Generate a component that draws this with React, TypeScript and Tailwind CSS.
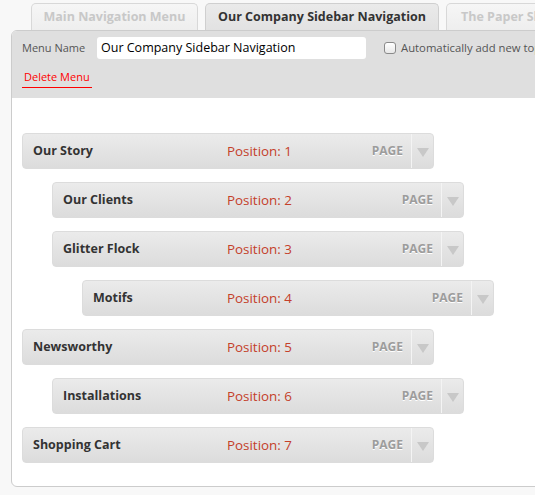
const items = [
  { label: "Our Story", pos: 1, depth: 0 },
  { label: "Our Clients", pos: 2, depth: 1 },
  { label: "Glitter Flock", pos: 3, depth: 1 },
  { label: "Motifs", pos: 4, depth: 2 },
  { label: "Newsworthy", pos: 5, depth: 0 },
  { label: "Installations", pos: 6, depth: 1 },
  { label: "Shopping Cart", pos: 7, depth: 0 },
];

const indent = ["ml-0", "ml-[30px]", "ml-[60px]"];
const labelW = ["w-[204px]", "w-[174px]", "w-[144px]"];

function MenuItem({ label, pos, depth }: { label: string; pos: number; depth: number }) {
  return (
    <div
      className={`${indent[depth]} flex h-[36px] w-[412px] shrink-0 items-center rounded-[4px] border border-[#dcdcdc] bg-gradient-to-b from-[#ebebeb] to-[#dcdcdc]`}
    >
      <div className={`${labelW[depth]} shrink-0 pl-[10px] text-[12.5px] font-bold text-[#333]`}>{label}</div>
      <div className="flex-1 text-[13.4px] text-[#c4402a]">Position: {pos}</div>
      <div className="pr-[8px] text-[12px] font-bold text-[#9c9c9c] [text-shadow:0_1px_0_#fff]">PAGE</div>
      <div className="flex h-full w-[22px] items-center justify-center border-l border-[#f4f4f4] pt-[2px]">
        <svg width="12" height="9" viewBox="0 0 12 9">
          <path d="M0 0 L12 0 L6 9 Z" fill="#c8c8c8" />
        </svg>
      </div>
    </div>
  );
}

export default function App() {
  return (
    <div className="h-[495px] w-[535px] overflow-hidden bg-[#f8f8f8] pt-[3px] font-['Open_Sans',sans-serif]">
      <div className="flex gap-[7px] pl-[31px]">
        <div className="flex h-[27px] w-[167px] shrink-0 items-center justify-center whitespace-nowrap rounded-t-[5px] border border-b-0 border-[#d8d8d8] bg-gradient-to-b from-[#f6f6f6] to-[#eeeeee] text-[12.5px] font-bold text-[#c8c8c8]">
          Main Navigation Menu
        </div>
        <div className="flex h-[27px] w-[234px] shrink-0 items-center justify-center whitespace-nowrap rounded-t-[5px] border border-b-0 border-[#cfcfcf] bg-gradient-to-b from-[#eaeaea] to-[#e2e2e2] text-[12.5px] font-bold text-[#333]">
          Our Company Sidebar Navigation
        </div>
        <div className="flex h-[27px] w-[160px] shrink-0 items-center whitespace-nowrap rounded-t-[5px] border border-b-0 border-[#d8d8d8] bg-gradient-to-b from-[#f6f6f6] to-[#eeeeee] pl-[14px] text-[12.5px] font-bold text-[#c8c8c8]">
          The Paper Shop
        </div>
      </div>
      <div className="ml-[11px] w-[560px] overflow-hidden rounded-[6px] border border-[#cccccc] bg-white">
        <div className="h-[67px] bg-[#dfdfdf] pl-[10px]">
          <div className="flex items-center pt-[6px]">
            <span className="w-[75px] shrink-0 text-[11px] text-[#555]">Menu Name</span>
            <div className="flex h-[22px] w-[269px] shrink-0 items-center rounded-[3px] bg-white pl-[4px] text-[12.5px] text-black">
              Our Company Sidebar Navigation
            </div>
            <span className="ml-[18px] h-[12px] w-[12px] shrink-0 rounded-[3px] border border-[#8a8a8a] bg-gradient-to-b from-white to-[#e8e8e8]" />
            <span className="ml-[5px] whitespace-nowrap text-[11.3px] text-[#555]">Automatically add new top-level pages</span>
          </div>
          <div className="mt-[10px] inline-block border-b border-[#ff0000] px-[2px] pb-[1px] text-[11px] text-[#ff0000]">
            Delete Menu
          </div>
        </div>
        <div className="flex h-[388px] flex-col gap-[13px] pl-[10px] pt-[35px]">
          {items.map((it) => (
            <MenuItem key={it.pos} {...it} />
          ))}
        </div>
      </div>
    </div>
  );
}
